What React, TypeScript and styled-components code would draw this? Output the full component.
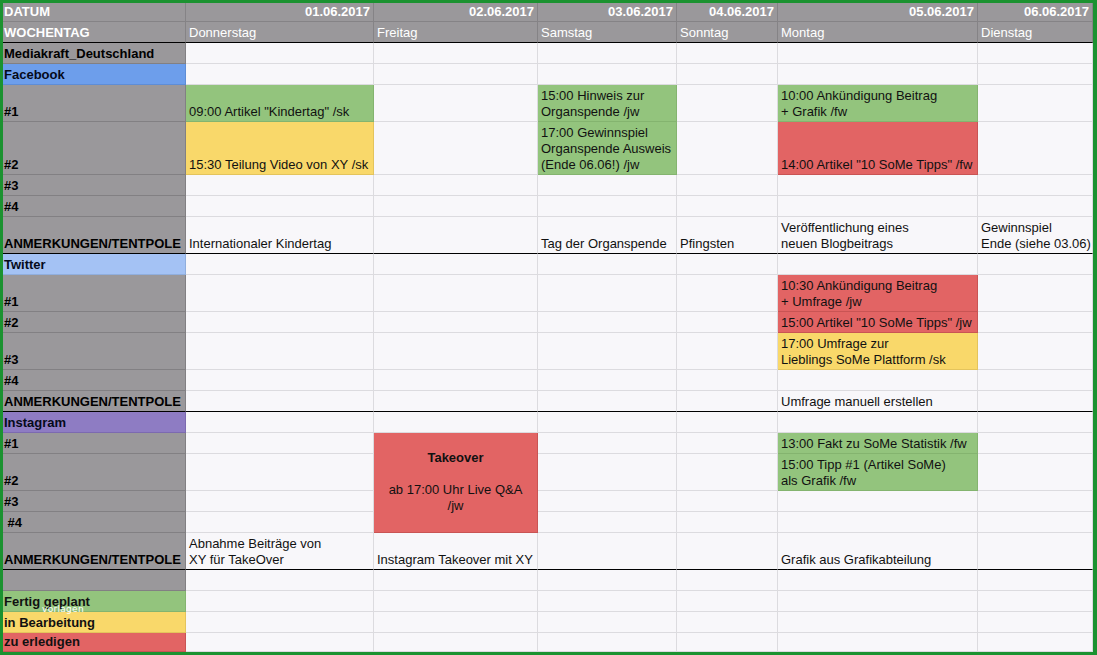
import React from "react";
import styled, { createGlobalStyle } from "styled-components";

type Tone = "plain" | "head" | "label" | "green" | "yellow" | "red" | "fb" | "tw" | "ig";

const tones: Record<Tone, { bg: string; line: string; color: string }> = {
  plain: { bg: "#f8f7fa", line: "#dcdbdf", color: "#111" },
  head: { bg: "#9a989b", line: "#858386", color: "#fff" },
  label: { bg: "#9a989b", line: "#828083", color: "#000" },
  green: { bg: "#93c47d", line: "#84b46f", color: "#111" },
  yellow: { bg: "#f9d86a", line: "#e4c45c", color: "#111" },
  red: { bg: "#e26464", line: "#c95454", color: "#111" },
  fb: { bg: "#6d9eeb", line: "#5e8dd6", color: "#050a1a" },
  tw: { bg: "#a4c2f4", line: "#90aedd", color: "#050a1a" },
  ig: { bg: "#8e7cc3", line: "#7c6ab0", color: "#050a1a" },
};

const GlobalStyle = createGlobalStyle`
  html, body {
    margin: 0;
    padding: 0;
    background: #fff;
  }
  body {
    font-family: "Liberation Sans", Arial, sans-serif;
  }
`;

const Frame = styled.div`
  position: relative;
  width: 1097px;
  height: 655px;
  box-sizing: border-box;
  border: 3px solid #1b9230;
  border-right-width: 4px;
  background: #f8f7fa;
  overflow: hidden;
`;

const Sheet = styled.div<{ $rows: string }>`
  display: grid;
  grid-template-columns: 183px 188px 164px 139px 101px 200px 115px;
  grid-template-rows: ${(p) => p.$rows};
`;

const Cell = styled.div<{
  $tone: Tone;
  $align?: "left" | "right" | "center";
  $bold?: boolean;
  $cut?: boolean;
  $span?: number;
  $label?: boolean;
}>`
  box-sizing: border-box;
  display: flex;
  flex-direction: column;
  justify-content: ${(p) => (p.$align === "center" ? "center" : "flex-end")};
  align-items: ${(p) =>
    p.$align === "right" ? "flex-end" : p.$align === "center" ? "center" : "flex-start"};
  padding: 0 3px 1px ${(p) => (p.$label ? "1px" : "3px")};
  background: ${(p) => tones[p.$tone].bg};
  color: ${(p) => tones[p.$tone].color};
  border-right: 1px solid ${(p) => tones[p.$tone].line};
  border-bottom: 1px solid ${(p) => (p.$cut ? "#000" : tones[p.$tone].line)};
  font-size: 13px;
  line-height: 16px;
  font-weight: ${(p) => (p.$bold ? "bold" : "normal")};
  text-align: ${(p) => p.$align || "left"};
  white-space: pre;
  grid-row: ${(p) => (p.$span ? `span ${p.$span}` : "auto")};
`;

const Line = styled.span<{ $strong?: boolean }>`
  display: block;
  min-height: 16px;
  font-weight: ${(p) => (p.$strong ? "bold" : "inherit")};
`;

const Watermark = styled.span`
  position: absolute;
  left: 39px;
  top: 601px;
  font-family: "DejaVu Sans", sans-serif;
  font-size: 9px;
  line-height: 10px;
  letter-spacing: 0.3px;
  color: #fff;
`;

interface CellData {
  text: string[];
  tone: Tone;
  span?: number;
  center?: boolean;
  strongFirst?: boolean;
}

interface RowData {
  label: string;
  labelTone?: Tone;
  h: number;
  cut?: boolean;
  cells: (CellData | null | "skip")[];
}

const green = (...text: string[]): CellData => ({ tone: "green", text });
const yellow = (...text: string[]): CellData => ({ tone: "yellow", text });
const red = (...text: string[]): CellData => ({ tone: "red", text });
const note = (...text: string[]): CellData => ({ tone: "plain", text });

const dates = ["01.06.2017", "02.06.2017", "03.06.2017", "04.06.2017", "05.06.2017", "06.06.2017"];
const days = ["Donnerstag", "Freitag", "Samstag", "Sonntag", "Montag", "Dienstag"];

const rows: RowData[] = [
  { label: "Mediakraft_Deutschland", h: 21, cells: [] },
  { label: "Facebook", labelTone: "fb", h: 21, cells: [] },
  {
    label: "#1",
    h: 37,
    cells: [
      green('09:00 Artikel "Kindertag" /sk'),
      null,
      green("15:00 Hinweis zur", "Organspende /jw"),
      null,
      green("10:00 Ankündigung Beitrag", "+ Grafik /fw"),
    ],
  },
  {
    label: "#2",
    h: 53,
    cells: [
      yellow("15:30 Teilung Video von XY /sk"),
      null,
      green("17:00 Gewinnspiel", "Organspende Ausweis", "(Ende 06.06!) /jw"),
      null,
      red('14:00 Artikel "10 SoMe Tipps" /fw'),
    ],
  },
  { label: "#3", h: 21, cells: [] },
  { label: "#4", h: 21, cells: [] },
  {
    label: "ANMERKUNGEN/TENTPOLE",
    h: 37,
    cut: true,
    cells: [
      note("Internationaler Kindertag"),
      null,
      note("Tag der Organspende"),
      note("Pfingsten"),
      note("Veröffentlichung eines", "neuen Blogbeitrags"),
      note("Gewinnspiel", "Ende (siehe 03.06)"),
    ],
  },
  { label: "Twitter", labelTone: "tw", h: 21, cells: [] },
  { label: "#1", h: 37, cells: [null, null, null, null, red("10:30 Ankündigung Beitrag", "+ Umfrage /jw")] },
  { label: "#2", h: 21, cells: [null, null, null, null, red('15:00 Artikel "10 SoMe Tipps" /jw')] },
  {
    label: "#3",
    h: 37,
    cells: [null, null, null, null, yellow("17:00 Umfrage zur", "Lieblings SoMe Plattform /sk")],
  },
  { label: "#4", h: 21, cells: [] },
  {
    label: "ANMERKUNGEN/TENTPOLE",
    h: 21,
    cut: true,
    cells: [null, null, null, null, note("Umfrage manuell erstellen")],
  },
  { label: "Instagram", labelTone: "ig", h: 21, cells: [] },
  {
    label: "#1",
    h: 21,
    cells: [
      null,
      {
        tone: "red",
        span: 4,
        center: true,
        strongFirst: true,
        text: ["Takeover", "", "ab 17:00 Uhr Live Q&A", "/jw"],
      },
      null,
      null,
      green("13:00 Fakt zu SoMe Statistik /fw"),
    ],
  },
  {
    label: "#2",
    h: 37,
    cells: [null, "skip", null, null, green("15:00 Tipp #1 (Artikel SoMe)", "als Grafik /fw")],
  },
  { label: "#3", h: 21, cells: [null, "skip"] },
  { label: " #4", h: 21, cells: [null, "skip"] },
  {
    label: "ANMERKUNGEN/TENTPOLE",
    h: 37,
    cut: true,
    cells: [
      note("Abnahme Beiträge von", "XY für TakeOver"),
      note("Instagram Takeover mit XY"),
      null,
      null,
      note("Grafik aus Grafikabteilung"),
    ],
  },
  { label: "", h: 21, cells: [] },
  { label: "Fertig geplant", labelTone: "green", h: 21, cells: [] },
  { label: "in Bearbeitung", labelTone: "yellow", h: 21, cells: [] },
  { label: "zu erledigen", labelTone: "red", h: 19, cells: [] },
];

const rowHeights = [19, 21, ...rows.map((r) => r.h)].map((h) => `${h}px`).join(" ");

const SheetRow: React.FC<{ row: RowData }> = ({ row }) => {
  const cells = Array.from({ length: 6 }, (_, i) => row.cells[i] ?? null);
  return (
    <>
      <Cell $tone={row.labelTone || "label"} $bold $label $cut={row.cut}>
        {row.label}
      </Cell>
      {cells.map((c, i) => {
        if (c === "skip") return null;
        if (!c) return <Cell key={i} $tone="plain" $cut={row.cut} />;
        return (
          <Cell
            key={i}
            $tone={c.tone}
            $cut={row.cut && !c.span}
            $span={c.span}
            $align={c.center ? "center" : "left"}
          >
            {c.text.map((t, j) => (
              <Line key={j} $strong={c.strongFirst && j === 0}>
                {t}
              </Line>
            ))}
          </Cell>
        );
      })}
    </>
  );
};

export default function App() {
  return (
    <>
      <GlobalStyle />
      <Frame>
        <Sheet $rows={rowHeights}>
          <Cell $tone="head" $bold $label>
            DATUM
          </Cell>
          {dates.map((d) => (
            <Cell key={d} $tone="head" $bold $align="right">
              {d}
            </Cell>
          ))}
          <Cell $tone="head" $bold $label $cut>
            WOCHENTAG
          </Cell>
          {days.map((d) => (
            <Cell key={d} $tone="head" $cut>
              {d}
            </Cell>
          ))}
          {rows.map((r, i) => (
            <SheetRow key={i} row={r} />
          ))}
        </Sheet>
        <Watermark>vorlagen</Watermark>
      </Frame>
    </>
  );
}
